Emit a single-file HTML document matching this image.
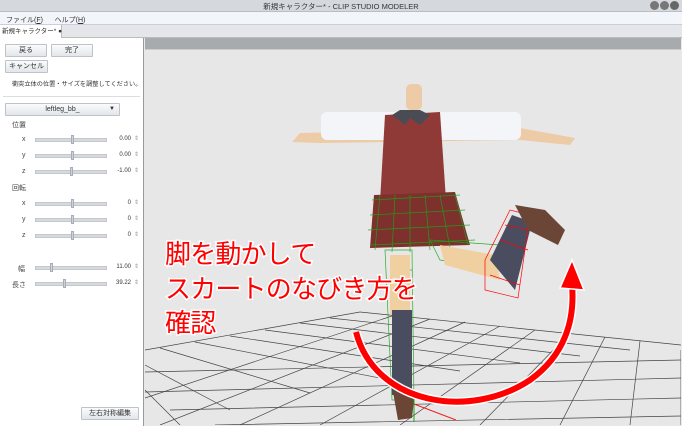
<!DOCTYPE html>
<html><head><meta charset="utf-8"><style>
*{margin:0;padding:0;box-sizing:border-box}
body{width:682px;height:426px;overflow:hidden;background:#e8e8e8;font-family:"Liberation Sans","Noto Sans CJK JP",sans-serif;font-size:7px;color:#333;position:relative}
.a{position:absolute}
.btn{position:absolute;border:1px solid #bfc3c8;background:linear-gradient(#fafbfc,#e3e6ea);text-align:center;line-height:11px;font-size:7px;border-radius:1px}
.tr{position:absolute;left:35px;width:72px;height:4px;background:#d7dadd;border:1px solid #c4c8cc}
.th{position:absolute;width:3px;height:9px;background:#d0d3d6;border:1px solid #aab;top:-4px}
.lb{position:absolute;font-size:7px;color:#444}
.v{position:absolute;width:40px;text-align:right;left:91px;font-size:6px}
.sp{position:absolute;left:134px;font-size:6px;color:#999}
</style></head><body>
<div class="a" style="left:0;top:0;width:682px;height:12px;background:#d5d9de;border-bottom:1px solid #b9bec4"></div>
<div class="a" style="left:0;top:1px;width:682px;text-align:center;font-size:7.5px;color:#333">新規キャラクター* - CLIP STUDIO MODELER</div>
<div class="a" style="left:650px;top:1px;width:9px;height:9px;border-radius:50%;background:#777"></div>
<div class="a" style="left:660px;top:1px;width:9px;height:9px;border-radius:50%;background:#777"></div>
<div class="a" style="left:670px;top:1px;width:9px;height:9px;border-radius:50%;background:#666"></div>
<div class="a" style="left:0;top:12px;width:682px;height:13px;background:#f2f5fa;border-bottom:1px solid #ccd"></div>
<div class="a" style="left:6px;top:15px;font-size:7px">ファイル(<u>F</u>)&nbsp;&nbsp;&nbsp;&nbsp;&nbsp;&nbsp;ヘルプ(<u>H</u>)</div>
<div class="a" style="left:0;top:25px;width:682px;height:13px;background:#e4e6e9;border-bottom:1px solid #bbb"></div>
<div class="a" style="left:0;top:25px;width:62px;height:13px;background:#fff;border-right:1px solid #bbb;font-size:6.5px;line-height:13px;padding-left:2px;white-space:nowrap">新規キャラクター* ●</div>
<div class="a" style="left:0;top:38px;width:144px;height:388px;background:#fff;border-right:1px solid #999"></div>
<div class="btn" style="left:5px;top:44px;width:42px;height:13px">戻る</div>
<div class="btn" style="left:51px;top:44px;width:42px;height:13px">完了</div>
<div class="btn" style="left:5px;top:60px;width:43px;height:13px">キャンセル</div>
<div class="a" style="left:12px;top:79px;font-size:6.2px;white-space:nowrap">衝突立体の位置・サイズを調整してください。</div>
<div class="a" style="left:3px;top:96px;width:137px;height:1px;background:#ddd"></div>
<div class="btn" style="left:5px;top:103px;width:115px;height:13px">leftleg_bb_<span style="position:absolute;right:4px;font-size:6px">▼</span></div>
<div class="lb" style="left:12px;top:120px">位置</div>
<div class="lb" style="left:22px;top:136px">x</div><div class="tr" style="top:138px"><div class="th" style="left:35px"></div></div><div class="v" style="top:136px">0.00</div><div class="sp" style="top:135px">⇕</div>
<div class="lb" style="left:22px;top:152px">y</div><div class="tr" style="top:154px"><div class="th" style="left:35px"></div></div><div class="v" style="top:152px">0.00</div><div class="sp" style="top:151px">⇕</div>
<div class="lb" style="left:22px;top:168px">z</div><div class="tr" style="top:170px"><div class="th" style="left:34px"></div></div><div class="v" style="top:168px">-1.00</div><div class="sp" style="top:167px">⇕</div>
<div class="lb" style="left:12px;top:183px">回転</div>
<div class="lb" style="left:22px;top:200px">x</div><div class="tr" style="top:202px"><div class="th" style="left:35px"></div></div><div class="v" style="top:200px">0</div><div class="sp" style="top:199px">⇕</div>
<div class="lb" style="left:22px;top:216px">y</div><div class="tr" style="top:218px"><div class="th" style="left:35px"></div></div><div class="v" style="top:216px">0</div><div class="sp" style="top:215px">⇕</div>
<div class="lb" style="left:22px;top:232px">z</div><div class="tr" style="top:234px"><div class="th" style="left:35px"></div></div><div class="v" style="top:232px">0</div><div class="sp" style="top:231px">⇕</div>
<div class="lb" style="left:18px;top:264px">幅</div><div class="tr" style="top:266px"><div class="th" style="left:14px"></div></div><div class="v" style="top:264px">11.00</div><div class="sp" style="top:263px">⇕</div>
<div class="lb" style="left:12px;top:280px">長さ</div><div class="tr" style="top:282px"><div class="th" style="left:27px"></div></div><div class="v" style="top:280px">39.22</div><div class="sp" style="top:279px">⇕</div>
<div class="btn" style="left:81px;top:407px;width:58px;height:13px">左右対称編集</div>
<div class="a" style="left:145px;top:38px;width:536px;height:12px;background:#a8abae;border-bottom:1px solid #ccc"></div>
<svg class="a" style="left:145px;top:50px" width="536" height="375" viewBox="145 50 536 375">
<rect x="145" y="50" width="536" height="375" fill="#e7e7e7"/>
<g stroke="#444" stroke-width="0.7" fill="none">
<path d="M360 312 L681 345"/>
<path d="M360 312 L145 350"/>
<path d="M330 318 L630 350 M300 323 L580 356 M265 330 L520 363 M230 336 L460 371 M195 342 L390 380 M160 348 L310 393 M145 365 L230 410 M145 390 L180 425"/>
<path d="M395 315 L145 398 M430 319 L160 425 M465 322 L240 425 M500 326 L320 425 M535 330 L400 425 M570 333 L480 425 M605 337 L560 425 M640 341 L630 425 M681 350 L681 425"/>
<path d="M145 372 L681 360 M145 392 L681 378 M170 410 L681 398 M215 425 L681 416"/>
</g>
<path d="M300 133 L520 128 L575 138 L570 145 L520 140 L320 143 L292 142 Z" fill="#eccba6"/>
<rect x="321" y="112" width="200" height="28" rx="6" fill="#f4f5f8"/>
<rect x="406" y="84" width="16" height="26" rx="5" fill="#eccba6"/>
<path d="M385 115 L440 112 L446 200 L380 202 Z" fill="#8f3a36"/>
<path d="M392 115 L405 125 L410 118 L420 125 L430 115 L420 110 L400 110 Z" fill="#4a4c55"/>
<path d="M374 195 L455 192 L470 245 L370 248 Z" fill="#7e302c"/>
<g stroke="#1aa51a" stroke-width="0.7" fill="none" opacity="0.9">
<path d="M372 200 L460 195 M370 215 L465 210 M368 230 L470 225 M370 245 L475 240 M380 195 L375 250 M395 195 L392 252 M410 195 L410 252 M425 195 L430 250 M440 195 L450 248 M455 195 L468 245"/>
<path d="M385 250 L412 250 L414 400 L392 400 Z M390 270 L412 270 M390 300 L412 300 M392 330 L412 330 M392 360 L412 360 M395 390 L412 390"/>
<path d="M430 240 L500 245 L505 270 L440 260 Z"/>
</g>
<rect x="390" y="255" width="20" height="60" fill="#f0d0a0"/>
<rect x="392" y="310" width="20" height="85" fill="#4a4c60"/>
<path d="M440 245 L495 255 L500 280 L445 265 Z" fill="#f0d0a0"/>
<path d="M490 260 L512 215 L532 222 L515 290 Z" fill="#4a4c60"/>
<g stroke="#f00" stroke-width="0.7" fill="none"><path d="M485 260 L510 210 L530 215 L518 298 L485 290 Z M490 275 L520 285 M500 240 L528 250 M505 225 L530 230"/></g>
<path d="M515 205 L545 210 L565 230 L558 245 L528 230 Z" fill="#6b4536"/>
<path d="M393 392 L415 390 L412 418 L398 420 Z" fill="#6b4536"/>
<path d="M414 397 L414 422" stroke="#1a1" stroke-width="1"/>
<path d="M414 404 L456 420" stroke="#e22" stroke-width="1"/>
<path d="M356 332 C375 405 470 420 530 380 C565 355 575 320 572 285" stroke="#fff" stroke-width="9" fill="none"/>
<path d="M356 332 C375 405 470 420 530 380 C565 355 575 320 572 285" stroke="#f00" stroke-width="6" fill="none"/>
<path d="M560 288 L572 260 L584 290 Z" fill="#f00" stroke="#fff" stroke-width="1.5"/>
<g font-family="Liberation Sans,Noto Sans CJK JP,sans-serif" font-size="26" letter-spacing="-0.8" fill="#f00" stroke="#fff" stroke-width="3" paint-order="stroke">
<text x="165" y="263">脚を動かして</text>
<text x="165" y="298">スカートのなびき方を</text>
<text x="165" y="332">確認</text>
</g>
</svg>
</body></html>
